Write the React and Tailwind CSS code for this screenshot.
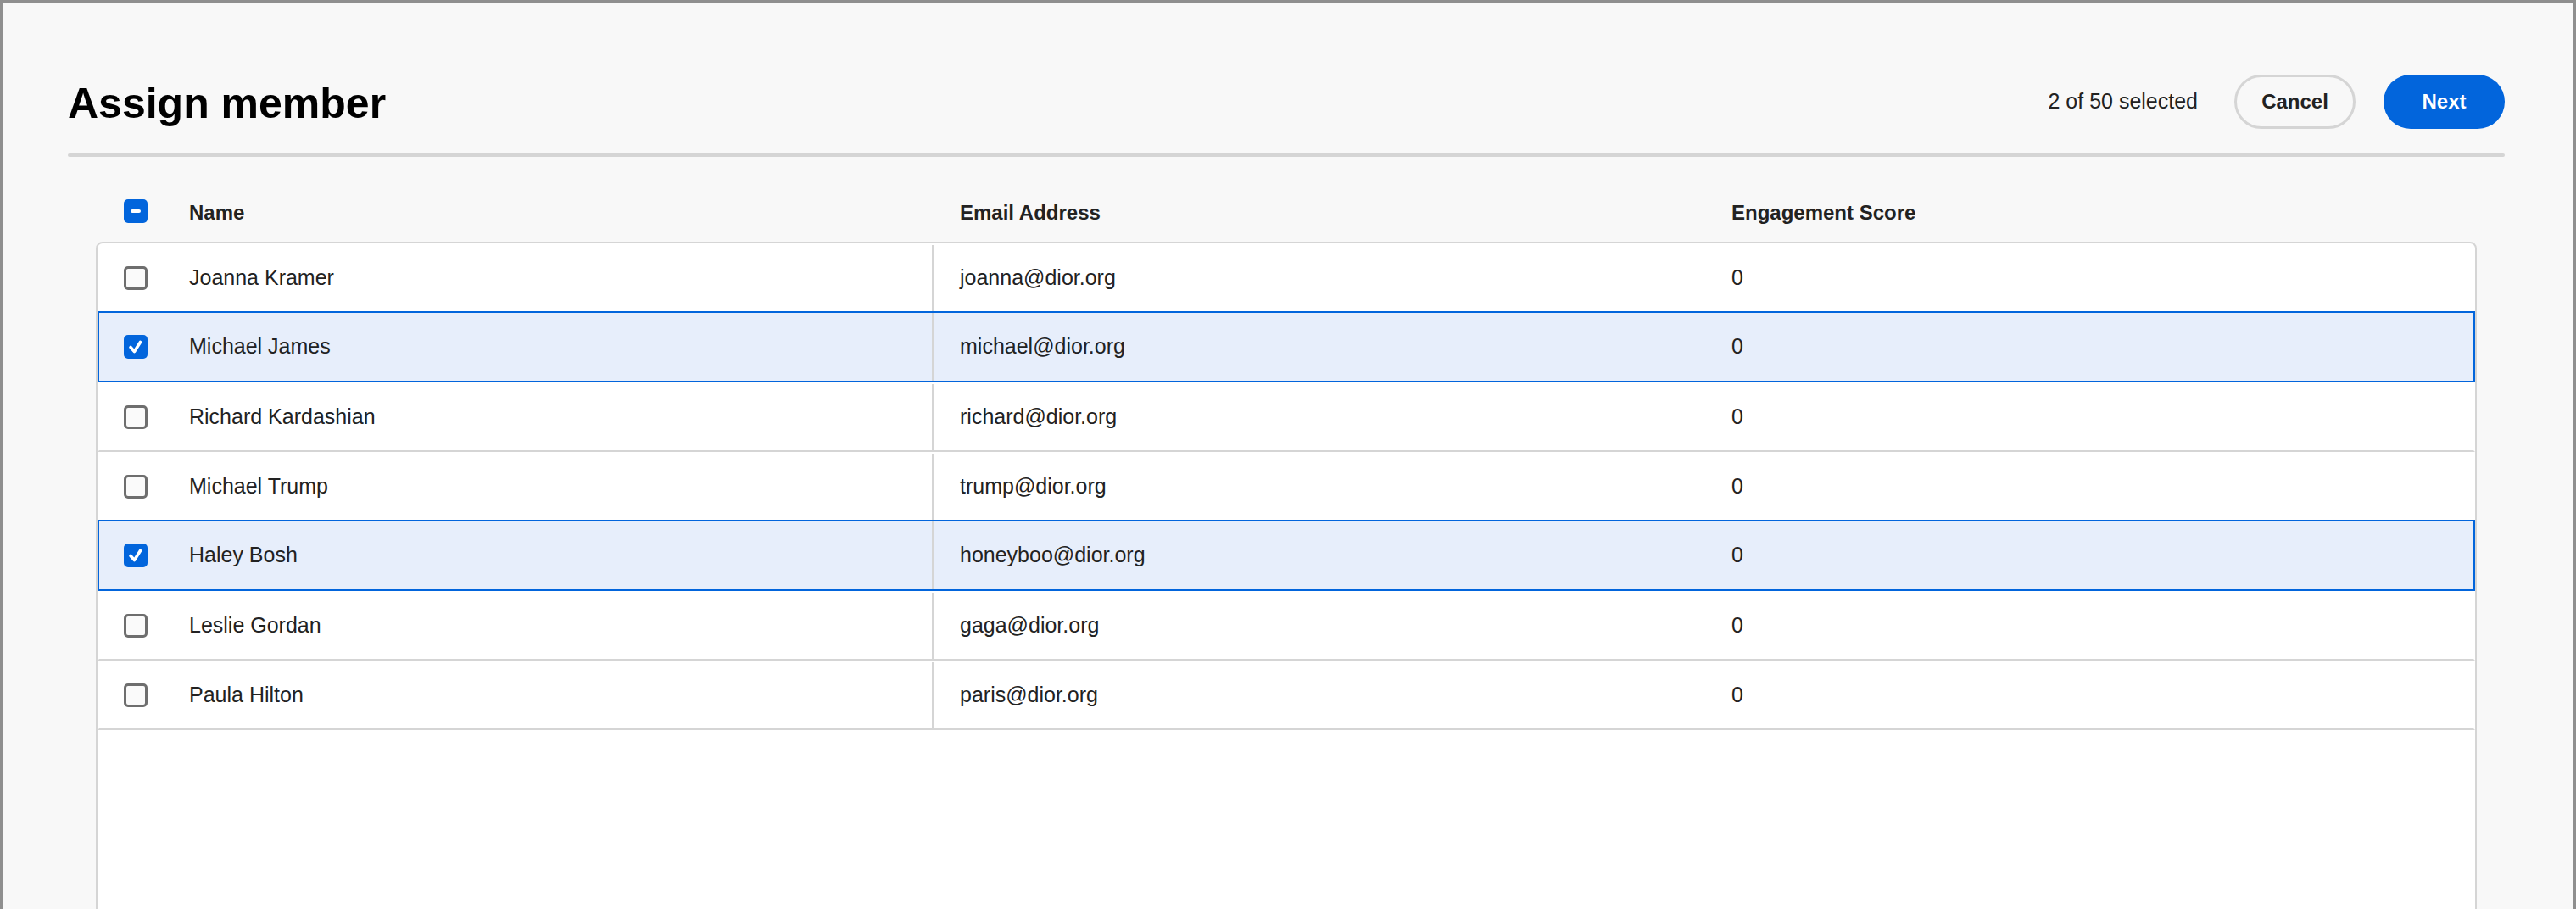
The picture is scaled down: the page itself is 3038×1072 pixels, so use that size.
import React from 'react';

const members = [
  { name: 'Joanna Kramer', email: 'joanna@dior.org', score: 0, selected: false },
  { name: 'Michael James', email: 'michael@dior.org', score: 0, selected: true },
  { name: 'Richard Kardashian', email: 'richard@dior.org', score: 0, selected: false },
  { name: 'Michael Trump', email: 'trump@dior.org', score: 0, selected: false },
  { name: 'Haley Bosh', email: 'honeyboo@dior.org', score: 0, selected: true },
  { name: 'Leslie Gordan', email: 'gaga@dior.org', score: 0, selected: false },
  { name: 'Paula Hilton', email: 'paris@dior.org', score: 0, selected: false },
];

// Spectrum-style checkbox: empty, checked, or indeterminate
function Checkbox({ state = 'off' }) {
  if (state === 'off') {
    return <div className="w-[28px] h-[28px] rounded-[5px] border-[3px] border-[#6e6e6e] bg-[#fafafa]" />;
  }
  return (
    <div className="w-[28px] h-[28px] rounded-[5px] bg-[#0265dc] flex items-center justify-center">
      {state === 'on' ? (
        <svg width="28" height="28" viewBox="0 0 28 28" fill="none">
          <path d="M8 14.5 L12.5 19.5 L19.5 8.5" stroke="white" strokeWidth="3.6" strokeLinecap="round" strokeLinejoin="round" />
        </svg>
      ) : (
        <div className="w-[12px] h-[4px] rounded-full bg-white" />
      )}
    </div>
  );
}

export default function App() {
  return (
    <div className="h-[1072px] overflow-hidden bg-[#f8f8f8] border-t-[3px] border-l-[3px] border-r-[4px] border-[#8f8f8f] pl-[77px] pr-[80px] flex flex-col font-['Liberation_Sans',Arial,sans-serif] text-[#222222]">
      {/* Header */}
      <header className="shrink-0 mt-[85px] h-[64px] flex items-center justify-between">
        <h1 className="text-[50px] font-bold text-black leading-none mt-[4px]">Assign member</h1>
        <div className="flex items-center">
          <span className="text-[25px] mr-[43px]">2 of 50 selected</span>
          <button className="w-[143px] h-[64px] rounded-full border-[3px] border-[#d5d5d5] text-[24px] font-bold text-[#222222]">
            Cancel
          </button>
          <button className="ml-[33px] w-[143px] h-[64px] rounded-full bg-[#0265dc] text-white text-[24px] font-bold">
            Next
          </button>
        </div>
      </header>
      <div className="shrink-0 mt-[29px] h-[4px] rounded-full bg-[#d5d5d5]" />

      <div className="shrink-0 mx-[33px] flex flex-col">
        {/* Column labels */}
        <div className="shrink-0 mt-[50px] h-[28px] px-[4px] flex items-center text-[24px] font-bold">
          <div className="w-[106px] pl-[29px] flex items-center">
            <Checkbox state="mixed" />
          </div>
          <div className="w-[876px] pt-[3px]">Name</div>
          <div className="w-[910px] pl-[33px] pt-[3px]">Email Address</div>
          <div className="flex-1 pl-[33px] pt-[3px]">Engagement Score</div>
        </div>

        {/* Table */}
        <div className="shrink-0 mt-[22px] h-[900px] bg-white border-2 border-[#d5d5d5] rounded-[8px] text-[25px]">
          {members.map((m) => (
            <div
              key={m.email}
              className={
                m.selected
                  ? 'relative z-10 -mt-[2px] h-[84px] flex items-stretch border-2 border-[#0265dc] bg-[#e7eefb]'
                  : 'h-[82px] flex items-stretch border-2 border-transparent border-b-[#d5d5d5]'
              }
            >
              <div className="w-[106px] pl-[29px] flex items-center">
                <Checkbox state={m.selected ? 'on' : 'off'} />
              </div>
              <div className="w-[876px] flex items-center">{m.name}</div>
              <div className="w-[910px] pl-[31px] flex items-center border-l-2 border-[#d5d5d5]">{m.email}</div>
              <div className="flex-1 pl-[33px] flex items-center">{m.score}</div>
            </div>
          ))}
        </div>
      </div>
    </div>
  );
}
